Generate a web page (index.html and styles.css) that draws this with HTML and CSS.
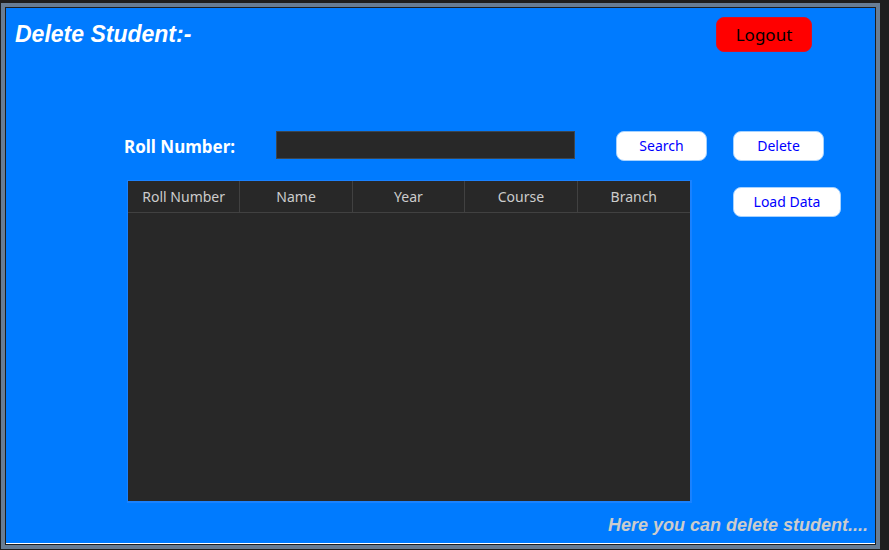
FILE: index.html
```html
<!DOCTYPE html>
<html lang="en">
<head>
<meta charset="utf-8">
<title>Delete Student</title>
<link rel="stylesheet" href="styles.css">
</head>
<body>
<div class="window">
  <div class="panel">
    <header class="header">
      <h1 class="title">Delete Student:-</h1>
      <button class="logout" type="button">Logout</button>
    </header>
    <main class="content">
      <label class="roll-label" for="roll">Roll Number:</label>
      <input class="roll-input" id="roll" type="text">
      <button class="btn search" type="button">Search</button>
      <button class="btn delete" type="button">Delete</button>
      <div class="table-pane">
        <table class="students">
          <thead>
            <tr><th scope="col">Roll Number</th><th scope="col">Name</th><th scope="col">Year</th><th scope="col">Course</th><th scope="col">Branch</th></tr>
          </thead>
          <tbody></tbody>
        </table>
      </div>
      <button class="btn load" type="button">Load Data</button>
    </main>
    <footer class="footer">Here you can delete student....</footer>
  </div>
</div>
</body>
</html>
```
FILE: styles.css
```css
* {
  box-sizing: border-box;
}

body {
  margin: 0;
  min-height: 100vh;
  display: flex;
  padding: 3px 9px 1px 1px;
  background: #1e1e1e;
  font-family: "Noto Sans", "Open Sans", sans-serif;
  font-size: 14px;
}

.window {
  flex: 1;
  display: flex;
  border: 4px solid #687d94;
}

.panel {
  flex: 1;
  display: flex;
  flex-direction: column;
  background: #007bff;
  border: 1px solid #1e1e1e;
  box-shadow: inset 0 -1px #ffffff;
}

.header {
  display: flex;
  align-items: flex-start;
  justify-content: space-between;
  padding: 9px 63px 0 9px;
}

.title {
  margin: 4px 0 0;
  color: #ffffff;
  font: italic bold 23px/26px "Liberation Sans", Arial, sans-serif;
}

.logout {
  width: 96px;
  height: 35px;
  padding: 0;
  border: 1px solid #e01020;
  border-radius: 8px;
  background: #ff0000;
  color: #000000;
  font-family: inherit;
  font-size: 17px;
}

.content {
  flex: 1;
  display: grid;
  grid-template-columns: 152px 1fr 41px 91px 26px 108px;
  grid-template-rows: 30px 1fr;
  row-gap: 19px;
  padding: 79px 34px 0 118px;
}

.roll-label {
  align-self: center;
  color: #ffffff;
  font-size: 17px;
  font-weight: 700;
}

.roll-input {
  align-self: start;
  min-width: 0;
  width: 100%;
  height: 28px;
  padding: 0 6px;
  border: 1px solid #3c4650;
  border-radius: 0;
  background: #282828;
  color: #cccccc;
  font: inherit;
}

.btn {
  height: 30px;
  padding: 0 0 2px;
  border: 1px solid #a6d2ff;
  border-radius: 8px;
  background: #ffffff;
  color: #0000ff;
  font-family: inherit;
  font-size: 14px;
}

.search {
  grid-column: 4;
}

.delete {
  grid-column: 6;
  width: 91px;
}

.load {
  grid-column: 6;
  margin-top: 7px;
}

.table-pane {
  grid-column: 1 / 5;
  margin: 0 15px 0 3px;
  border: 1px solid #1a82ff;
  border-right-width: 2px;
  border-bottom-width: 2px;
  background: #282828;
}

.students {
  width: 100%;
  table-layout: fixed;
  border-collapse: separate;
  border-spacing: 0;
}

.students th {
  height: 32px;
  padding: 0;
  border-right: 1px solid #414141;
  border-bottom: 1px solid #414141;
  color: #cccccc;
  font-weight: 400;
}

.students th:last-child {
  border-right: 0;
}

.footer {
  padding: 12px 7px 8px;
  color: #cccccc;
  font: italic bold 18px/21px "Liberation Sans", Arial, sans-serif;
  text-align: right;
}
```
